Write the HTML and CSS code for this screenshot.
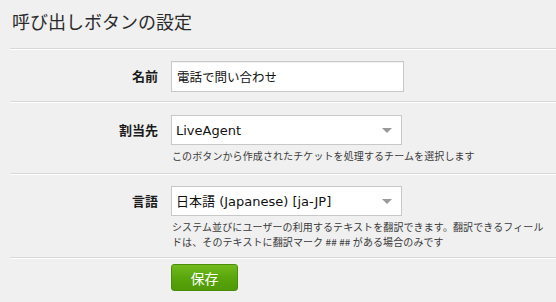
FILE: index.html
```html
<!DOCTYPE html>
<html lang="ja">
<head>
    <meta charset="UTF-8">
    <meta name="viewport" content="width=device-width, initial-scale=1.0">
    <title>呼び出しボタンの設定</title>
    <link rel="stylesheet" href="styles.css">
</head>
<body>
    <div class="panel">
        <h2 class="title">呼び出しボタンの設定</h2>

        <div class="row row-name">
            <label class="label">名前</label>
            <div class="field">
                <input type="text" class="text-input" value="電話で問い合わせ">
            </div>
        </div>

        <div class="row row-group">
            <label class="label">割当先</label>
            <div class="field">
                <div class="select">
                    <select>
                        <option>LiveAgent</option>
                    </select>
                </div>
                <p class="help">このボタンから作成されたチケットを処理するチームを選択します</p>
            </div>
        </div>

        <div class="row row-lang">
            <label class="label">言語</label>
            <div class="field">
                <div class="select">
                    <select>
                        <option>日本語 (Japanese) [ja-JP]</option>
                    </select>
                </div>
                <p class="help">システム並びにユーザーの利用するテキストを翻訳できます。翻訳できるフィールドは、そのテキストに翻訳マーク ## ## がある場合のみです</p>
            </div>
        </div>

        <div class="actions">
            <button class="save">保存</button>
        </div>
    </div>
</body>
</html>
```

FILE: styles.css
```css
body {
    margin: 0;
    background-color: #f0f0f0;
    font-family: "DejaVu Sans", "Noto Sans CJK JP", sans-serif;
    color: #222;
}
.panel {
    width: 556px;
}
.title {
    margin: 0 0 0 10px;
    padding: 9px 0 0 2px;
    height: 49px;
    box-sizing: border-box;
    font-family: "Noto Sans CJK JP", sans-serif;
    font-size: 18px;
    line-height: 24px;
    font-weight: normal;
    color: #2a2a2a;
    border-bottom: 1px solid #d8d8d8;
    box-shadow: 0 1px 0 #fff;
}
.row {
    display: grid;
    grid-template-columns: 148px 1fr;
    column-gap: 13px;
    margin-left: 10px;
    border-bottom: 1px solid #d8d8d8;
    box-shadow: 0 1px 0 #fff;
}
.row-name {
    padding: 12px 0 9px;
}
.row-group {
    padding: 13px 0 10px;
}
.row-lang {
    padding: 12px 0 8px;
}
.label {
    text-align: right;
    font-family: "Noto Sans CJK JP", sans-serif;
    font-size: 13px;
    font-weight: bold;
    line-height: 30px;
    color: #1a1a1a;
}
.text-input {
    display: block;
    width: 233px;
    height: 31px;
    box-sizing: border-box;
    padding: 0 5px;
    border: 1px solid #c8c8c8;
    box-shadow: inset 0 1px 1px rgba(0, 0, 0, 0.06);
    background: white;
    font-family: "Noto Sans CJK JP", sans-serif;
    font-size: 12.5px;
    color: #111;
    outline: none;
}
.select {
    position: relative;
    width: 231px;
}
.select select {
    display: block;
    width: 100%;
    height: 30px;
    box-sizing: border-box;
    padding: 0 24px 0 4px;
    border: 1px solid #c8c8c8;
    border-radius: 0;
    background: white;
    -webkit-appearance: none;
    appearance: none;
    font-family: "DejaVu Sans", "Noto Sans CJK JP", sans-serif;
    font-size: 13px;
    color: #111;
    outline: none;
}
.select::after {
    content: "";
    position: absolute;
    right: 10px;
    top: 13px;
    border-left: 5px solid transparent;
    border-right: 5px solid transparent;
    border-top: 5px solid #999;
    pointer-events: none;
}
.help {
    width: 380px;
    margin: 3px 0 0 1px;
    font-family: "Noto Sans CJK JP", sans-serif;
    font-size: 10px;
    line-height: 15px;
    letter-spacing: 0.1px;
    color: #3a3a3a;
}
.actions {
    padding: 6px 0 0 171px;
}
.save {
    width: 67px;
    height: 27px;
    border: 1px solid #4b8d0b;
    border-radius: 3px;
    background: linear-gradient(#72bb1d, #5aa60c 50%, #4f9a06);
    color: white;
    font-family: "Noto Sans CJK JP", sans-serif;
    font-size: 14px;
    cursor: pointer;
}
.save:hover {
    background: #4f9a06;
}
```
